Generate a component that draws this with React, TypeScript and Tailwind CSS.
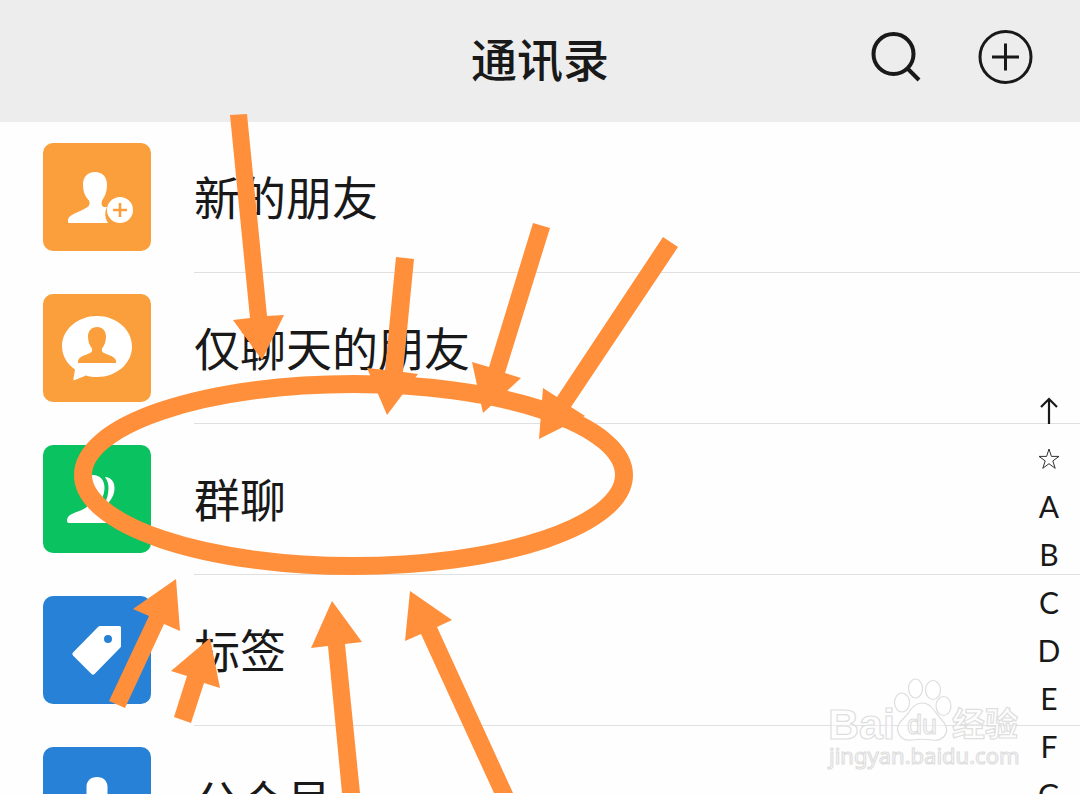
import React from "react";

type Entry = { label: string; tile: string; icon: React.ReactNode };

const NewFriend = () => (
  <svg viewBox="0 0 108 108" className="size-full" aria-hidden="true">
    <path
      fill="#fff"
      d="M52 29c7.500 0 12 5 12 12.500 0 7-2 12-5 16-1 4 0 6 2 6.500h3A16 16 0 0 0 65 80H26c-1 0-1-1-1-2 0-3 1-4.500 4-6 4-2.500 9-4 13-6.500 4-2 5.500-4 4-8-4-4-6-9-6-16C40 34 44.500 29 52 29z"
    />
    <circle cx="77" cy="67" r="13" fill="#fff" />
    <path d="M77 60v14M70 67h14" stroke="#fa9f3c" strokeWidth="2.600" />
  </svg>
);

const ChatFriend = () => (
  <svg viewBox="0 0 108 108" className="size-full" aria-hidden="true">
    <path
      fill="#fff"
      d="M54 22c19.500 0 35 13.500 35 30.500S73.500 83 54 83c-4 0-7.500-.5-11-1.500L32 86c-1.500.5-2 0-1.500-1.500L32 75.500C24 70 19 61.500 19 52.500 19 35.500 34.500 22 54 22z"
    />
    <path
      fill="#fa9f3c"
      d="M54 33c5.500 0 9 4 9 9.500 0 5-1.500 9-4 12-.5 2.500 0 3.500 2 4.500 4 2 7 2.500 9 4 2.500 1.500 3.500 3.500 3 6H35c-.5-2.500.5-4.500 3-6 2-1.500 5-2 9-4 2-1 2.500-2 2-4.500-2.500-3-4-7-4-12 0-5.500 3.500-9.500 9-9.500z"
    />
  </svg>
);

const Group = () => (
  <svg viewBox="0 0 108 108" className="size-full" aria-hidden="true">
    <path
      fill="#fff"
      d="M50 30c7 0 11.500 5 11.500 12.500 0 6.500-2.500 12-5.500 15.500-1 3.500 0 5.500 3 7 5 2.500 10 4 13 6 2.500 2 3 4 3 7H26c-1.500 0-2-1-2-2.500 0-2.500 1-4.500 4-6 5-2.500 9-3.500 13.500-6 3-1.500 3.500-3.500 2.500-6-3-4-5.500-9-5.500-15C38.500 35 43 30 50 30z"
    />
    <path
      fill="#fff"
      d="M62 32c6 .5 9.500 4.500 9.500 11 0 6-2.500 10.500-5.500 14-.5 3 1 5 3.500 6.500 5 2.500 9.500 4 12 6 2 1.500 3 4.500 2.500 8.500h-5c0-6-2-8.500-7-11-5-2.200-9-4-11.500-6.500 3-5 5-10.500 5-17.500 0-4-1-7.500-3.500-11z"
    />
  </svg>
);

const Tag = () => (
  <svg viewBox="0 0 108 108" className="size-full" aria-hidden="true">
    <path
      fill="#fff"
      fillRule="evenodd"
      d="M57 30h19.500q1.500 0 1.500 1.500V50q0 1-.8 1.800L51.500 78q-1.500 1.500-3 0L30 59.500q-1.500-1.500 0-3L55 31q1-1 2-1zm8 9a4 4 0 1 0 0 8 4 4 0 0 0 0-8z"
    />
  </svg>
);

const Official = () => (
  <svg viewBox="0 0 108 108" className="size-full" aria-hidden="true">
    <path
      fill="#fff"
      d="M54 30c6.500 0 10.500 4 10.500 10v12c0 4-1.500 8-4 10 0 4 20 6 20 16H27.500c0-10 20-12 20-16-2.500-2-4-6-4-10V40c0-6 4-10 10.500-10z"
    />
  </svg>
);

const entries: Entry[] = [
  { label: "新的朋友", tile: "bg-[#fa9f3c]", icon: <NewFriend /> },
  { label: "仅聊天的朋友", tile: "bg-[#fa9f3c]", icon: <ChatFriend /> },
  { label: "群聊", tile: "bg-[#0ac25f]", icon: <Group /> },
  { label: "标签", tile: "bg-[#2782d7]", icon: <Tag /> },
  { label: "公众号", tile: "bg-[#2782d7]", icon: <Official /> },
];

const letters = ["A", "B", "C", "D", "E", "F", "G"];

const arrows = [
  "230,115 247,114 267,316 284,315 262,360 233,320 250,318",
  "396,257 414,259 403,372 418,374 387,415 367,368 385,370",
  "533,223 550,228 505,373 521,378 483,413 472,362 489,367",
  "663,237 678,247 571,407 585,416 539,439 543,388 557,397",
  "176,579 180,631 164,624 125,708 109,701 149,616 133,609",
  "210,638 220,688 204,683 191,723 174,717 187,676 171,671",
  "332,601 362,642 345,644 360,793 342,793 328,646 311,648",
  "410,591 452,620 437,627 513,793 494,793 421,634 405,641",
];

function Header() {
  return (
    <header className="grid h-[122px] grid-cols-[1fr_auto_1fr] items-center bg-[#ededed] pb-2">
      <h1 className="col-start-2 text-[46px] leading-[60px] font-medium">通讯录</h1>
      <div className="flex items-center justify-end gap-[50px] pr-[46px]">
        <button type="button" aria-label="搜索" className="size-14">
          <svg viewBox="0 0 56 56" className="size-full overflow-visible" fill="none" stroke="#191919" strokeWidth="4">
            <circle cx="21.500" cy="25" r="20" />
            <path d="M35.500 39.500l11.500 11.500" strokeWidth="4" />
          </svg>
        </button>
        <button type="button" aria-label="添加" className="size-14">
          <svg viewBox="0 0 56 56" className="size-full" fill="none" stroke="#191919" strokeWidth="3">
            <circle cx="27.500" cy="28" r="25.500" />
            <path d="M27.500 14.500v27M14 28h27" />
          </svg>
        </button>
      </div>
    </header>
  );
}

function AlphabetIndex() {
  return (
    <nav
      aria-label="字母索引"
      className="absolute top-[386px] right-0 flex w-[62px] flex-col text-center font-[Lato,'Noto_Sans_CJK_SC',sans-serif] text-[30px] leading-[48px]"
    >
      <a href="#top" aria-label="顶部" className="flex h-12 items-center justify-center">
        <svg viewBox="0 0 20 28" className="h-7 w-5" fill="none" stroke="#191919" strokeWidth="2.200">
          <path d="M10 28V3M2 11l8-8 8 8" />
        </svg>
      </a>
      <a href="#starred" aria-label="星标朋友" className="flex h-12 items-center justify-center">
        <svg viewBox="0 0 24 24" className="size-6" fill="none" stroke="#333" strokeWidth="1">
          <path d="M12 3l2.400 7.400H22l-6.200 4.500 2.400 7.400L12 17.700l-6.200 4.600 2.400-7.400L2 10.400h7.600z" />
        </svg>
      </a>
      {letters.map((l) => (
        <a key={l} href={"#" + l}>
          {l}
        </a>
      ))}
    </nav>
  );
}

function Watermark() {
  return (
    <svg
      viewBox="0 0 210 110"
      className="pointer-events-none absolute top-[670px] left-[820px] h-[110px] w-[210px]"
      fill="#fff"
      stroke="#dedede"
      strokeWidth="1.200"
      fillOpacity="0.5"
    >
      <text x="8" y="69" fontSize="43" fontWeight="700" fontFamily="Liberation Sans, sans-serif">
        Bai
      </text>
      <ellipse cx="82" cy="32.500" rx="7.500" ry="9.500" />
      <ellipse cx="95.500" cy="18.500" rx="7" ry="9.500" />
      <ellipse cx="113" cy="20" rx="7.500" ry="9.500" />
      <ellipse cx="123.500" cy="36" rx="7.500" ry="9.500" />
      <path d="M102 33c10 0 13 10 19 16 5 5 7 9 5 14-2 6-8 8-14 7-7-1-14-1-20 0-7 1-12-2-14-8-2-6 2-10 6-14 6-6 9-15 18-15z" />
      <text x="87" y="64" fontSize="27" fontFamily="Liberation Sans, sans-serif">
        du
      </text>
      <text x="132" y="66" fontSize="33" fontWeight="700" fontFamily="Noto Sans CJK SC, sans-serif">
        经验
      </text>
      <text x="9" y="94" fontSize="22" fontFamily="Noto Sans, sans-serif">
        jingyan.baidu.com
      </text>
    </svg>
  );
}

function Annotations() {
  return (
    <svg
      viewBox="0 0 1080 794"
      className="pointer-events-none absolute top-0 left-0 h-[794px] w-[1080px]"
      fill="#ff8f3a"
      aria-hidden="true"
    >
      <ellipse cx="353.500" cy="475" rx="270.500" ry="91" fill="none" stroke="#ff8f3a" strokeWidth="18" />
      {arrows.map((points) => (
        <polygon key={points} points={points} />
      ))}
    </svg>
  );
}

export default function App() {
  return (
    <div className="relative h-screen overflow-hidden bg-[#fefefe] font-['Noto_Sans_CJK_SC',sans-serif] text-[#191919]">
      <Header />
      <main>
        <ul>
          {entries.map((e) => (
            <li key={e.label}>
              <a href={"#" + e.label} className="flex pl-[43px]">
                <span className="flex h-[151px] w-[151px] items-center pb-0.5">
                  <span className={"size-[108px] overflow-hidden rounded-[10px] " + e.tile}>{e.icon}</span>
                </span>
                <span className="flex h-[151px] flex-1 items-center border-b border-[#e0e0e0] pb-1 text-[46px] leading-[60px]">
                  {e.label}
                </span>
              </a>
            </li>
          ))}
        </ul>
      </main>
      <Watermark />
      <AlphabetIndex />
      <Annotations />
    </div>
  );
}
